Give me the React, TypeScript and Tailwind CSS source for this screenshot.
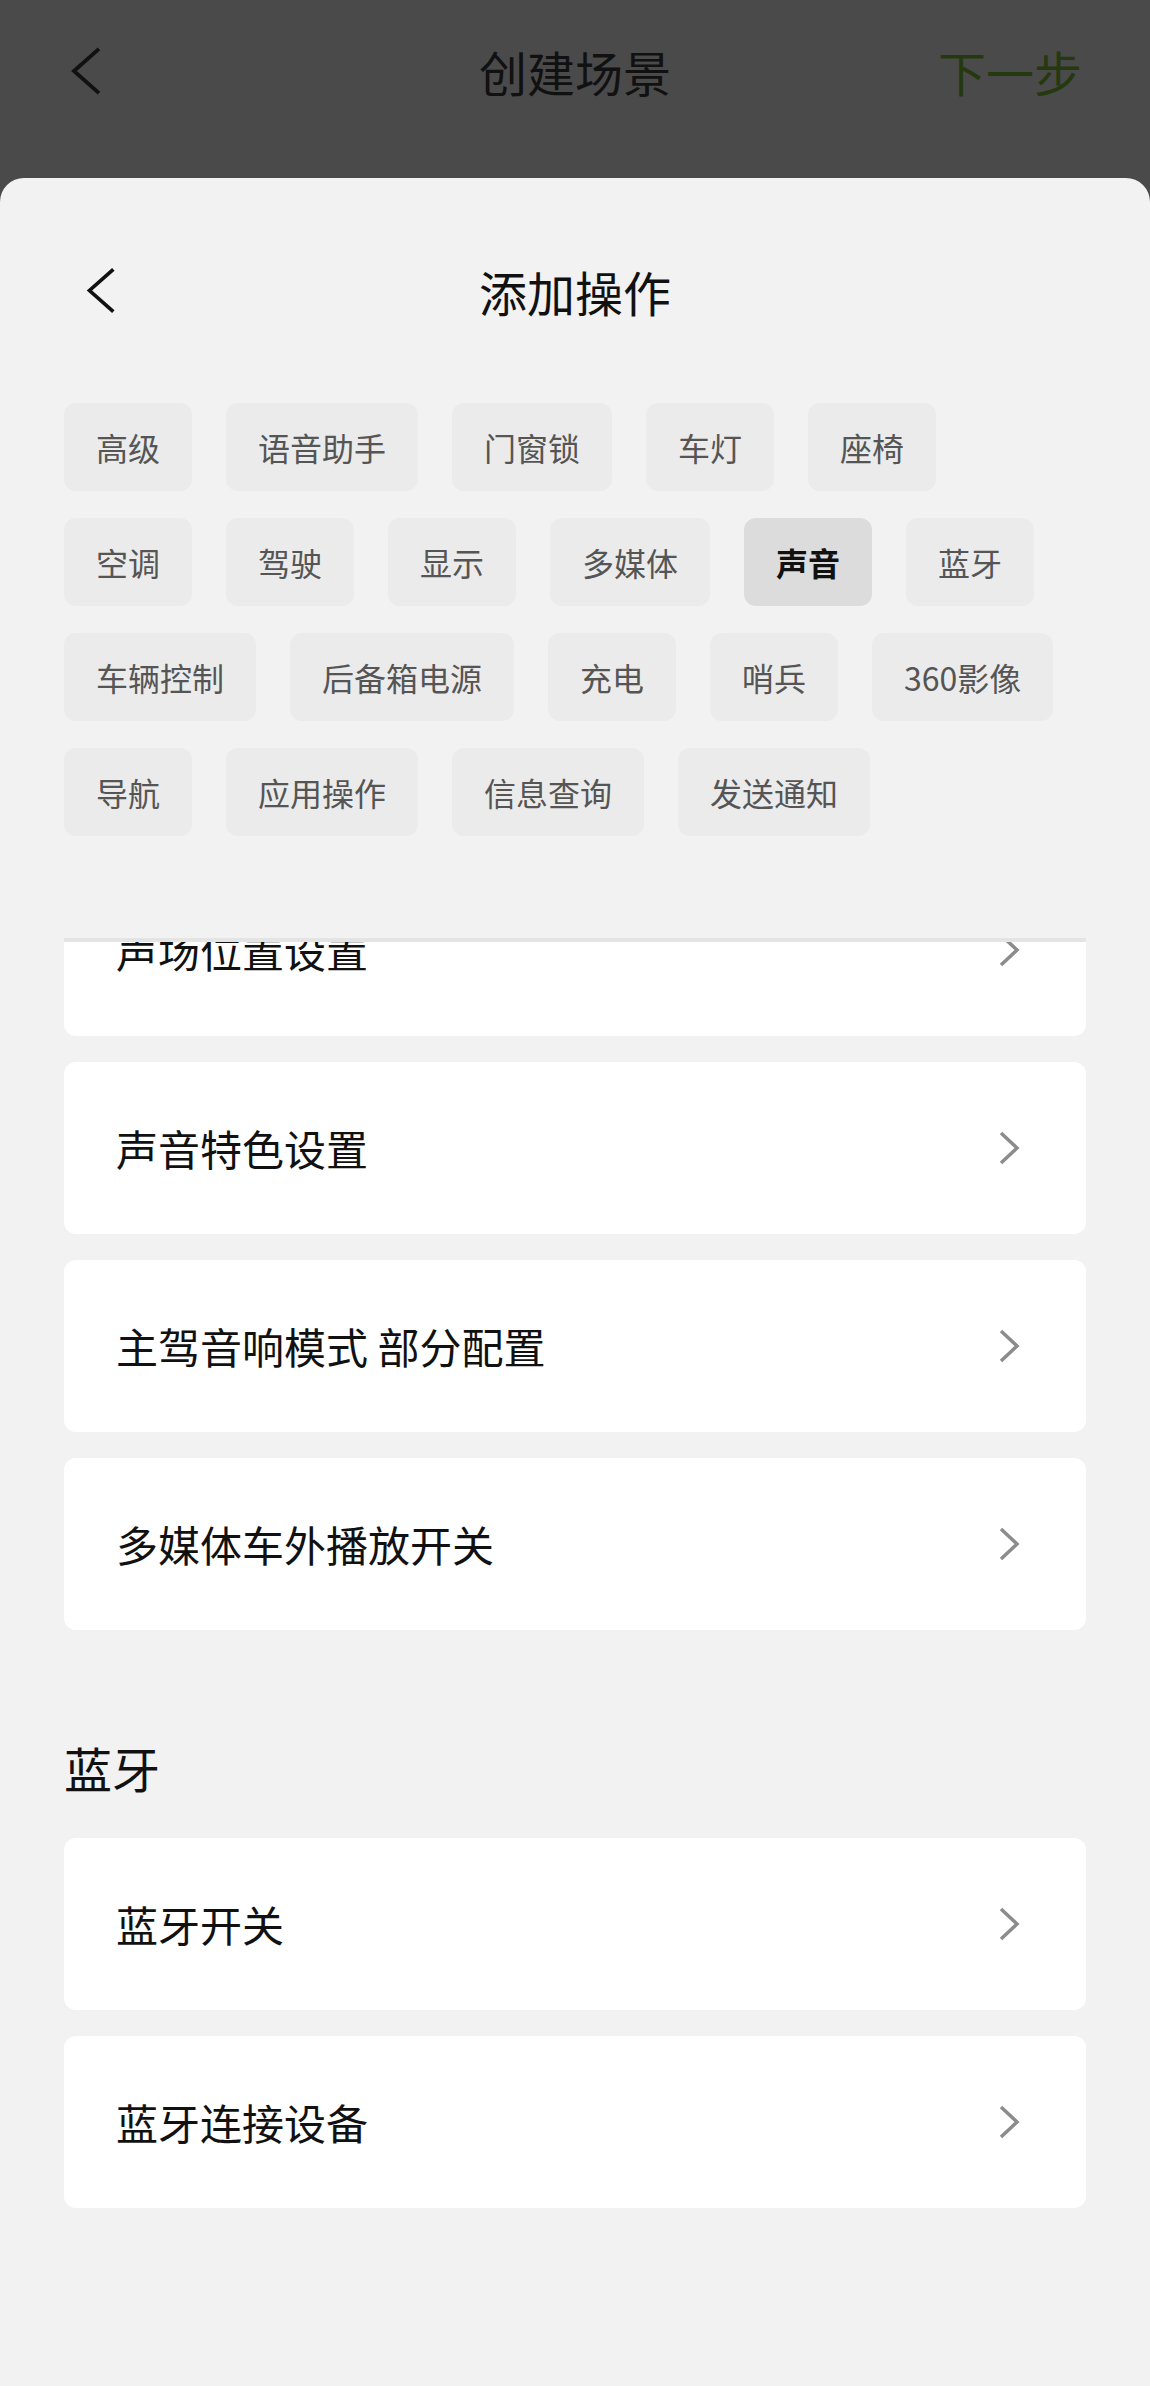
import { Fragment } from 'react';

const TAGS = [
  '高级', '语音助手', '门窗锁', '车灯', '座椅',
  '空调', '驾驶', '显示', '多媒体', '声音', '蓝牙',
  '车辆控制', '后备箱电源', '充电', '哨兵', '360影像',
  '导航', '应用操作', '信息查询', '发送通知',
];

const SOUND_ITEMS = ['声场位置设置', '声音特色设置', '主驾音响模式 部分配置', '多媒体车外播放开关'];
const BT_ITEMS = ['蓝牙开关', '蓝牙连接设备'];

function BackArrow({ className }: { className?: string }) {
  return (
    <svg viewBox="0 0 36 52" className={className} fill="none">
      <polyline points="32,3 6,26 32,49" stroke="#111" strokeWidth="4" strokeLinejoin="miter" />
    </svg>
  );
}

function Chevron() {
  return (
    <svg viewBox="0 0 22 34" className="w-[22px] h-[34px]" fill="none">
      <polyline points="3,2 19,17 3,32" stroke="#8c8c8c" strokeWidth="3.5" />
    </svg>
  );
}

function ActionCard({ label }: { label: string }) {
  return (
    <div className="h-[172px] bg-white rounded-[12px] flex items-center justify-between pl-[52px] pr-[66px]">
      <span className="text-[42px] leading-none text-[#111]">{label}</span>
      <Chevron />
    </div>
  );
}

export default function App() {
  return (
    <div
      className="w-[1150px] h-[2386px] bg-[#4a4a4a] flex flex-col overflow-hidden"
      style={{ fontFamily: '"Noto Sans CJK SC", "Noto Sans", sans-serif' }}
    >
      {/* Page header behind the sheet */}
      <div className="h-[178px] shrink-0">
        <div className="h-[142px] grid grid-cols-[1fr_auto_1fr] items-center px-[68px]">
          <BackArrow className="w-[35px] h-[50px]" />
          <span className="text-[48px] leading-none text-[#111]">创建场景</span>
          <span className="justify-self-end text-[48px] leading-none text-[#25390f]">下一步</span>
        </div>
      </div>

      {/* Sheet */}
      <div className="flex-1 bg-[#f2f2f2] rounded-t-[24px] flex flex-col">
        <div className="h-[225px] shrink-0 grid grid-cols-[1fr_auto_1fr] items-center px-[84px]">
          <BackArrow className="w-[33px] h-[53px]" />
          <span className="text-[48px] leading-none text-[#111]">添加操作</span>
          <span />
        </div>

        <div className="flex flex-wrap gap-x-[34px] gap-y-[27px] px-[64px]">
          {TAGS.map((tag) => {
            const active = tag === '声音';
            return (
              <div
                key={tag}
                className={`h-[88px] px-[32px] rounded-[12px] flex items-center text-[32px] leading-none ${
                  active ? 'bg-[#dcdcdc] text-[#111] font-bold' : 'bg-[#ebebeb] text-[#555]'
                }`}
              >
                {tag}
              </div>
            );
          })}
        </div>

        <div className="mt-[102px] mx-[64px] h-[4px] bg-[#e4e4e4] shrink-0" />

        {/* Scrolled list */}
        <div className="flex-1 overflow-hidden px-[64px]">
          <div className="-mt-[78px] flex flex-col">
            <div className="flex flex-col gap-[26px]">
              {SOUND_ITEMS.map((item) => (
                <ActionCard key={item} label={item} />
              ))}
            </div>
            <Fragment>
              <div className="mt-[113px] mb-[47px] text-[48px] leading-none text-[#111]">蓝牙</div>
              <div className="flex flex-col gap-[26px]">
                {BT_ITEMS.map((item) => (
                  <ActionCard key={item} label={item} />
                ))}
              </div>
            </Fragment>
          </div>
        </div>
      </div>
    </div>
  );
}
